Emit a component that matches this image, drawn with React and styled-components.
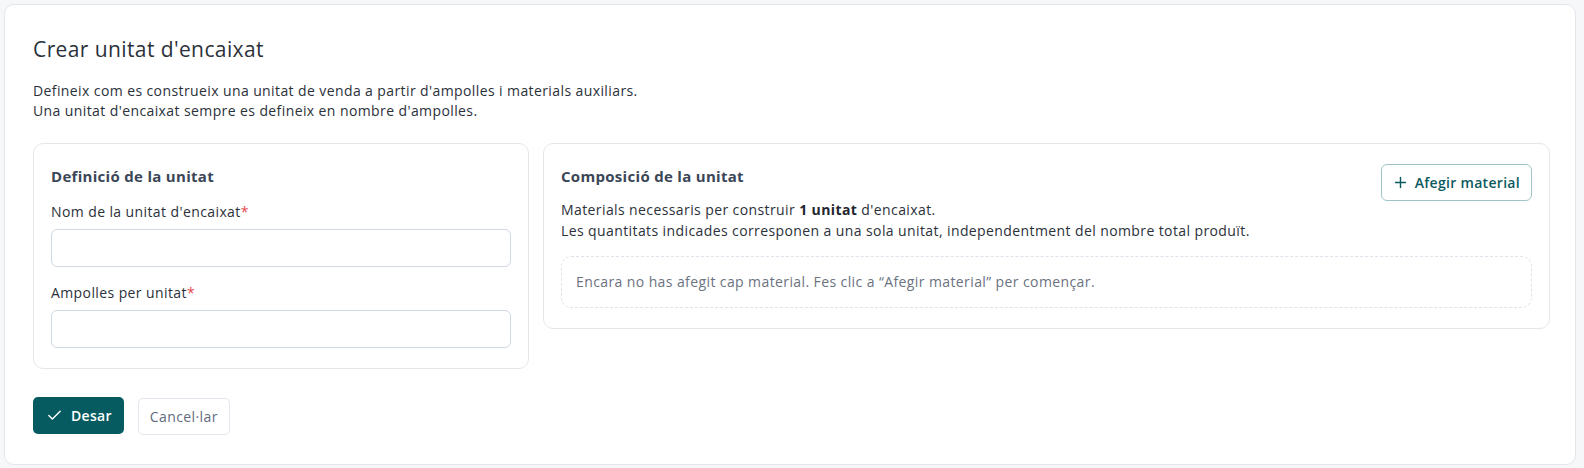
import React from 'react'
import styled, { createGlobalStyle } from 'styled-components'

const GlobalStyle = createGlobalStyle`
  html, body {
    margin: 0;
    padding: 0;
    overflow: hidden;
    background: #f6f7f9;
    font-family: "Open Sans", "Liberation Sans", sans-serif;
    color: #2f3640;
    letter-spacing: 0.4px;
  }
  * { box-sizing: border-box; }
`

const Page = styled.div`
  width: 100%;
  height: 100vh;
  padding: 4px 8px 3px 4px;
`

const Card = styled.div`
  background: #fff;
  border: 1px solid #e3e7ec;
  border-radius: 10px;
  padding: 30px 25px 28px 28px;
  height: 100%;
`

const Title = styled.h1`
  margin: 0;
  font-size: 21px;
  font-weight: 400;
  color: #2b313a;
  line-height: 28px;
  letter-spacing: 0.4px;
`

const Intro = styled.p`
  margin: 18px 0 0;
  font-size: 14px;
  line-height: 20px;
  color: #2b313a;
`

const Columns = styled.div`
  display: grid;
  grid-template-columns: 496px 1fr;
  gap: 14px;
  align-items: start;
  margin-top: 22px;
`

const Panel = styled.section`
  border: 1px solid #e3e7ec;
  border-radius: 10px;
  padding: 22px 17px 20px 17px;
`

const PanelHead = styled.div`
  display: flex;
  justify-content: space-between;
  align-items: flex-start;
`

const PanelTitle = styled.h2`
  margin: 0;
  font-size: 15px;
  font-weight: 700;
  color: #3b4657;
  line-height: 20px;
  letter-spacing: 0.3px;
`

const Field = styled.div`
  margin-top: 16px;
`

const Label = styled.label`
  display: block;
  font-size: 14px;
  line-height: 20px;
  color: #2b313a;
  margin-bottom: 7px;
`

const Req = styled.span`
  color: #e5484d;
`

const Input = styled.input`
  display: block;
  width: 100%;
  height: 38px;
  border: 1px solid #cfd8e3;
  border-radius: 6px;
  background: #fff;
  outline: none;
`

const OutlineButton = styled.button`
  display: inline-flex;
  align-items: center;
  gap: 6px;
  height: 37px;
  padding: 0 11px 0 10px;
  margin: -2px 0 -4px;
  border: 1px solid #9fc4c6;
  border-radius: 6px;
  background: #fff;
  color: #0d5a5e;
  font-family: inherit;
  font-size: 14px;
  font-weight: 600;
  letter-spacing: 0.3px;
`

const Text = styled.p`
  margin: 2px 0 0;
  font-size: 14px;
  line-height: 21px;
  color: #2b313a;
  b { font-weight: 700; color: #1f2630; }
`

const Empty = styled.div`
  margin-top: 15px;
  border: 1px dashed #dde3ea;
  border-radius: 10px;
  padding: 15px 14px;
  font-size: 14px;
  line-height: 20px;
  color: #6b7280;
`

const Actions = styled.div`
  display: flex;
  gap: 14px;
  margin-top: 28px;
`

const PrimaryButton = styled.button`
  display: inline-flex;
  align-items: center;
  gap: 8px;
  height: 37px;
  padding: 0 12px 0 13px;
  border: none;
  border-radius: 5px;
  background: #055b5f;
  color: #fff;
  font-family: inherit;
  font-size: 14px;
  font-weight: 600;
  letter-spacing: 0.3px;
`

const GhostButton = styled.button`
  height: 37px;
  padding: 0 11px;
  border: 1px solid #e2e7ee;
  border-radius: 5px;
  background: #fff;
  color: #5f6b7c;
  font-family: inherit;
  font-size: 14px;
  font-weight: 500;
  letter-spacing: 0.4px;
  margin-top: 1px;
`

const Icon = ({ children, size = 16 }) => (
  <svg width={size} height={size} viewBox="0 0 24 24" fill="none" stroke="currentColor" strokeWidth="2" strokeLinecap="round" strokeLinejoin="round">
    {children}
  </svg>
)

export default function App() {
  return (
    <Page>
      <GlobalStyle />
      <Card>
        <Title>Crear unitat d'encaixat</Title>
        <Intro>
          Defineix com es construeix una unitat de venda a partir d'ampolles i materials auxiliars.<br />
          Una unitat d'encaixat sempre es defineix en nombre d'ampolles.
        </Intro>
        <Columns>
          <Panel>
            <PanelTitle>Definició de la unitat</PanelTitle>
            <Field>
              <Label>Nom de la unitat d'encaixat<Req>*</Req></Label>
              <Input />
            </Field>
            <Field>
              <Label>Ampolles per unitat<Req>*</Req></Label>
              <Input />
            </Field>
          </Panel>
          <Panel>
            <PanelHead>
              <PanelTitle>Composició de la unitat</PanelTitle>
              <OutlineButton>
                <Icon size={17}><path d="M12 5v14" /><path d="M5 12h14" /></Icon>
                Afegir material
              </OutlineButton>
            </PanelHead>
            <Text>
              Materials necessaris per construir <b>1 unitat</b> d'encaixat.<br />
              Les quantitats indicades corresponen a una sola unitat, independentment del nombre total produït.
            </Text>
            <Empty>Encara no has afegit cap material. Fes clic a “Afegir material” per començar.</Empty>
          </Panel>
        </Columns>
        <Actions>
          <PrimaryButton>
            <Icon size={17}><path d="M20 6 9 17l-5-5" /></Icon>
            Desar
          </PrimaryButton>
          <GhostButton>Cancel·lar</GhostButton>
        </Actions>
      </Card>
    </Page>
  )
}
